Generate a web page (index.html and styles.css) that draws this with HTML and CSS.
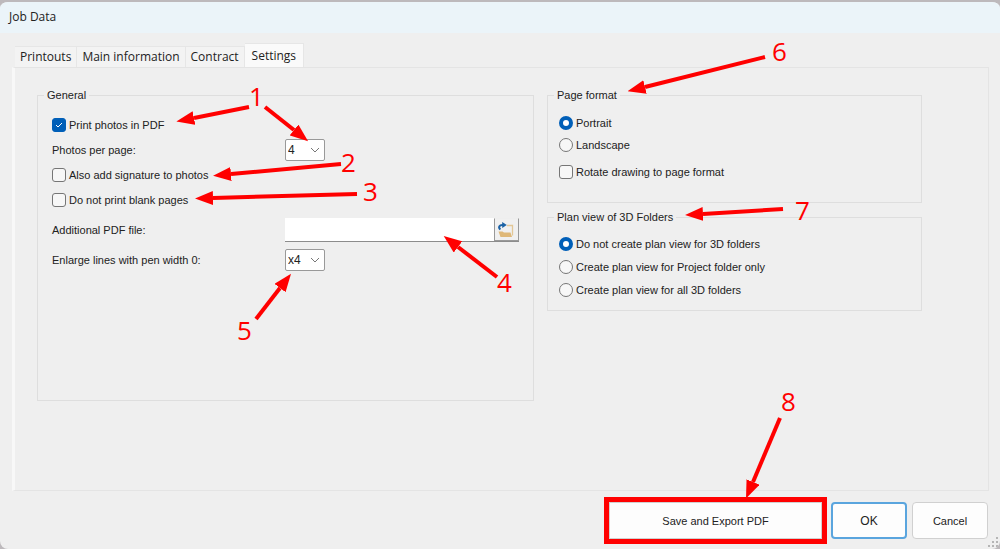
FILE: index.html
```
<!DOCTYPE html>
<html lang="en">
<head>
    <meta charset="UTF-8">
    <meta name="viewport" content="width=device-width, initial-scale=1.0">
    <title>Job Data</title>
    <link rel="stylesheet" href="styles.css">
</head>
<body>
    <div class="window">
        <header class="titlebar">Job Data</header>
        <main class="content">
            <div class="tabs" role="tablist">
                <button type="button" class="tab" role="tab">Printouts</button>
                <button type="button" class="tab" role="tab">Main information</button>
                <button type="button" class="tab" role="tab">Contract</button>
                <button type="button" class="tab active" role="tab" aria-selected="true">Settings</button>
            </div>
            <form class="panel" id="settingsForm">
                <fieldset class="group general">
                    <legend>General</legend>
                    <label class="row"><input type="checkbox" name="printPhotos" checked>Print photos in PDF</label>
                    <div class="row">
                        <label class="name" for="perPage">Photos per page:</label>
                        <select id="perPage" name="perPage">
                            <option>1</option>
                            <option>2</option>
                            <option selected>4</option>
                        </select>
                    </div>
                    <label class="row"><input type="checkbox" name="signature">Also add signature to photos</label>
                    <label class="row"><input type="checkbox" name="noBlank">Do not print blank pages</label>
                    <div class="row file-row">
                        <label class="name" for="pdfFile">Additional PDF file:</label>
                        <div class="file">
                            <input type="text" id="pdfFile" name="pdfFile">
                            <button type="button" class="browse" aria-label="Browse">
                                <svg width="18" height="18" viewBox="0 0 18 18">
                                    <path d="M10 4.5h5.5v10" fill="none" stroke="#e3c796" stroke-width="1.3"/>
                                    <path d="M1.5 10.5h4l1.5 1h6.5l1.5 4.5H3.5z" fill="#dfb878"/>
                                    <path d="M3.4 8.6C.8 6.4 2.5 3.6 6 4" fill="none" stroke="#1c62a5" stroke-width="2"/>
                                    <path d="M5.2 1l4.6 3-4.6 3z" fill="#1c62a5"/>
                                </svg>
                            </button>
                        </div>
                    </div>
                    <div class="row">
                        <label class="name" for="penWidth">Enlarge lines with pen width 0:</label>
                        <select id="penWidth" name="penWidth">
                            <option>x1</option>
                            <option>x2</option>
                            <option selected>x4</option>
                        </select>
                    </div>
                </fieldset>
                <div class="side">
                    <fieldset class="group format">
                        <legend>Page format</legend>
                        <label class="row"><input type="radio" name="format" checked>Portrait</label>
                        <label class="row"><input type="radio" name="format">Landscape</label>
                        <label class="row rotate"><input type="checkbox" name="rotate">Rotate drawing to page format</label>
                    </fieldset>
                    <fieldset class="group plan">
                        <legend>Plan view of 3D Folders</legend>
                        <label class="row"><input type="radio" name="plan" checked>Do not create plan view for 3D folders</label>
                        <label class="row"><input type="radio" name="plan">Create plan view for Project folder only</label>
                        <label class="row"><input type="radio" name="plan">Create plan view for all 3D folders</label>
                    </fieldset>
                </div>
            </form>
        </main>
        <footer class="footer">
            <div class="highlight"><button type="submit" form="settingsForm" class="btn save">Save and Export PDF</button></div>
            <button type="button" class="btn ok">OK</button>
            <button type="button" class="btn">Cancel</button>
        </footer>
        <svg class="grip" width="12" height="12" viewBox="0 0 12 12" fill="#b5b5b5">
            <path d="M8 0h2v2H8zM4 4h2v2H4zM8 4h2v2H8zM0 8h2v2H0zM4 8h2v2H4zM8 8h2v2H8z"/>
        </svg>
    </div>

    <!-- numbered callouts over the dialog -->
    <svg class="callouts" width="1000" height="549" viewBox="0 0 1000 549">
        <defs>
            <marker id="head" markerUnits="userSpaceOnUse" markerWidth="18" markerHeight="14" refX="0" refY="7" orient="auto">
                <path d="M0 0l18 7-18 7z" fill="#f00"/>
            </marker>
        </defs>
        <g class="arrows">
            <path d="M249 107L194 118"/>
            <path d="M265 107L294 130"/>
            <path d="M341 164L231 174"/>
            <path d="M357 194L213 198"/>
            <path d="M497 277L458 247"/>
            <path d="M256 319L280 288"/>
            <path d="M765 57L645 87"/>
            <path d="M783 209L703 214"/>
            <path d="M780 418L753 482"/>
        </g>
        <g class="numbers">
            <text x="249" y="106">1</text>
            <text x="341" y="172">2</text>
            <text x="363" y="201">3</text>
            <text x="497" y="292">4</text>
            <text x="237" y="340">5</text>
            <text x="772" y="61">6</text>
            <text x="795" y="220">7</text>
            <text x="781" y="411">8</text>
        </g>
    </svg>
</body>
</html>
```
FILE: styles.css
```
* {
    box-sizing: border-box;
}
body {
    margin: 0;
    background-color: #bdb9bc;
    font-family: "Liberation Sans", Arial, sans-serif;
    font-size: 11px;
    color: #222;
}
button, input, select {
    font: inherit;
    color: inherit;
}
.window {
    position: relative;
    display: flex;
    flex-direction: column;
    min-height: 100vh;
    border-top: 2px solid #bdb9bc;
    border-radius: 8px;
    background-color: #efefef;
    overflow: hidden;
}
.titlebar {
    height: 31px;
    padding: 0 9px;
    background-color: #ebf4f9;
    font-family: "Open Sans", sans-serif;
    font-size: 12px;
    line-height: 30px;
}
.content {
    flex: 1;
    display: flex;
    flex-direction: column;
    padding: 10px 11px 0 12px;
}
.tabs {
    display: flex;
    align-items: flex-end;
    padding-left: 3px;
}
.tab {
    height: 21px;
    padding: 0 5px;
    border: 1px solid #e6e6e6;
    border-width: 1px 1px 0 0;
    background-color: #f3f3f3;
    font-family: "Open Sans", sans-serif;
    font-size: 12px;
    line-height: 20px;
}
.tab.active {
    height: 24px;
    padding: 0 7px;
    background-color: #fafafa;
}
.panel {
    flex: 1;
    display: grid;
    grid-template-columns: 497fr 375fr;
    gap: 13px;
    padding: 19px 66px 89px 22px;
    border: 1px solid #e4e4e4;
    border-left: 3px solid #f8f8f8;
}
.group {
    min-width: 0;
    margin: 0;
    border: 1px solid #dedede;
    padding: 9px 14px;
}
.group legend {
    margin-left: -8px;
    padding: 0 3px;
    line-height: 16px;
}
.row {
    display: flex;
    align-items: center;
    height: 25px;
}
.row input[type="checkbox"], .row input[type="radio"] {
    appearance: none;
    flex: none;
    width: 14px;
    height: 14px;
    margin: 0 3px 0 0;
    border: 1px solid #767676;
    border-radius: 3px;
    background-color: #f7f7f7;
}
.row input[type="radio"] {
    border-radius: 50%;
}
.row input[type="checkbox"]:checked {
    border-color: #005fb8;
    background: #005fb8 url("data:image/svg+xml,%3Csvg xmlns='http://www.w3.org/2000/svg' viewBox='0 0 12 12'%3E%3Cpath d='M3 6l2 2 4-4' fill='none' stroke='white'/%3E%3C/svg%3E");
}
.row input[type="radio"]:checked {
    border: 4px solid #005fb8;
    background-color: white;
}
.name {
    flex: 0 0 233px;
}
select {
    appearance: none;
    width: 40px;
    height: 22px;
    padding: 0 2px;
    border: 1px solid #999;
    border-radius: 2px;
    background: white url("data:image/svg+xml,%3Csvg xmlns='http://www.w3.org/2000/svg' viewBox='0 0 10 10'%3E%3Cpath d='M1 3l4 4 4-4' fill='none' stroke='%23777'/%3E%3C/svg%3E") no-repeat right 4px center / 10px 10px;
}
.row select {
    font-size: 12px;
}
.file-row {
    margin: 5px 0;
}
.file {
    flex: 1;
    display: flex;
    height: 24px;
    border-bottom: 1px solid #8c8c8c;
    background-color: white;
}
.file input {
    flex: 1;
    min-width: 0;
    border: 0;
    background: transparent;
}
.browse {
    width: 25px;
    padding: 2px;
    border: 1px solid #999;
    border-top-color: #eee;
    background-color: #f0f0f0;
}
.browse svg {
    display: block;
}
.side {
    display: flex;
    flex-direction: column;
    gap: 6px;
}
.format, .plan {
    padding-left: 11px;
}
.format legend, .plan legend {
    margin-left: -5px;
}
.format {
    padding-bottom: 19px;
}
.format .row {
    height: 22px;
}
.format .rotate {
    margin-top: 5px;
}
.plan {
    padding-top: 7px;
}
.plan .row {
    height: 23px;
}
.footer {
    display: flex;
    justify-content: flex-end;
    align-items: center;
    gap: 5px;
    padding: 6px 12px 5px;
}
.highlight {
    display: flex;
    margin-right: -1px;
    border: 5px solid #f00;
}
.btn {
    width: 76px;
    height: 37px;
    padding: 0;
    border: 1px solid #d0d0d0;
    border-radius: 4px;
    background-color: #fdfdfd;
}
.btn.save {
    width: 213px;
    border-radius: 0;
}
.btn.ok {
    border: 2px solid #5aa5de;
    font-size: 12px;
}
.grip {
    position: absolute;
    right: 0;
    bottom: 0;
}
.callouts {
    position: absolute;
    top: 0;
    left: 0;
    pointer-events: none;
}
.arrows path {
    stroke: #f00;
    stroke-width: 4px;
    marker-end: url(#head);
}
.numbers {
    fill: #f00;
    font-family: "Open Sans", sans-serif;
    font-size: 26px;
}
```
